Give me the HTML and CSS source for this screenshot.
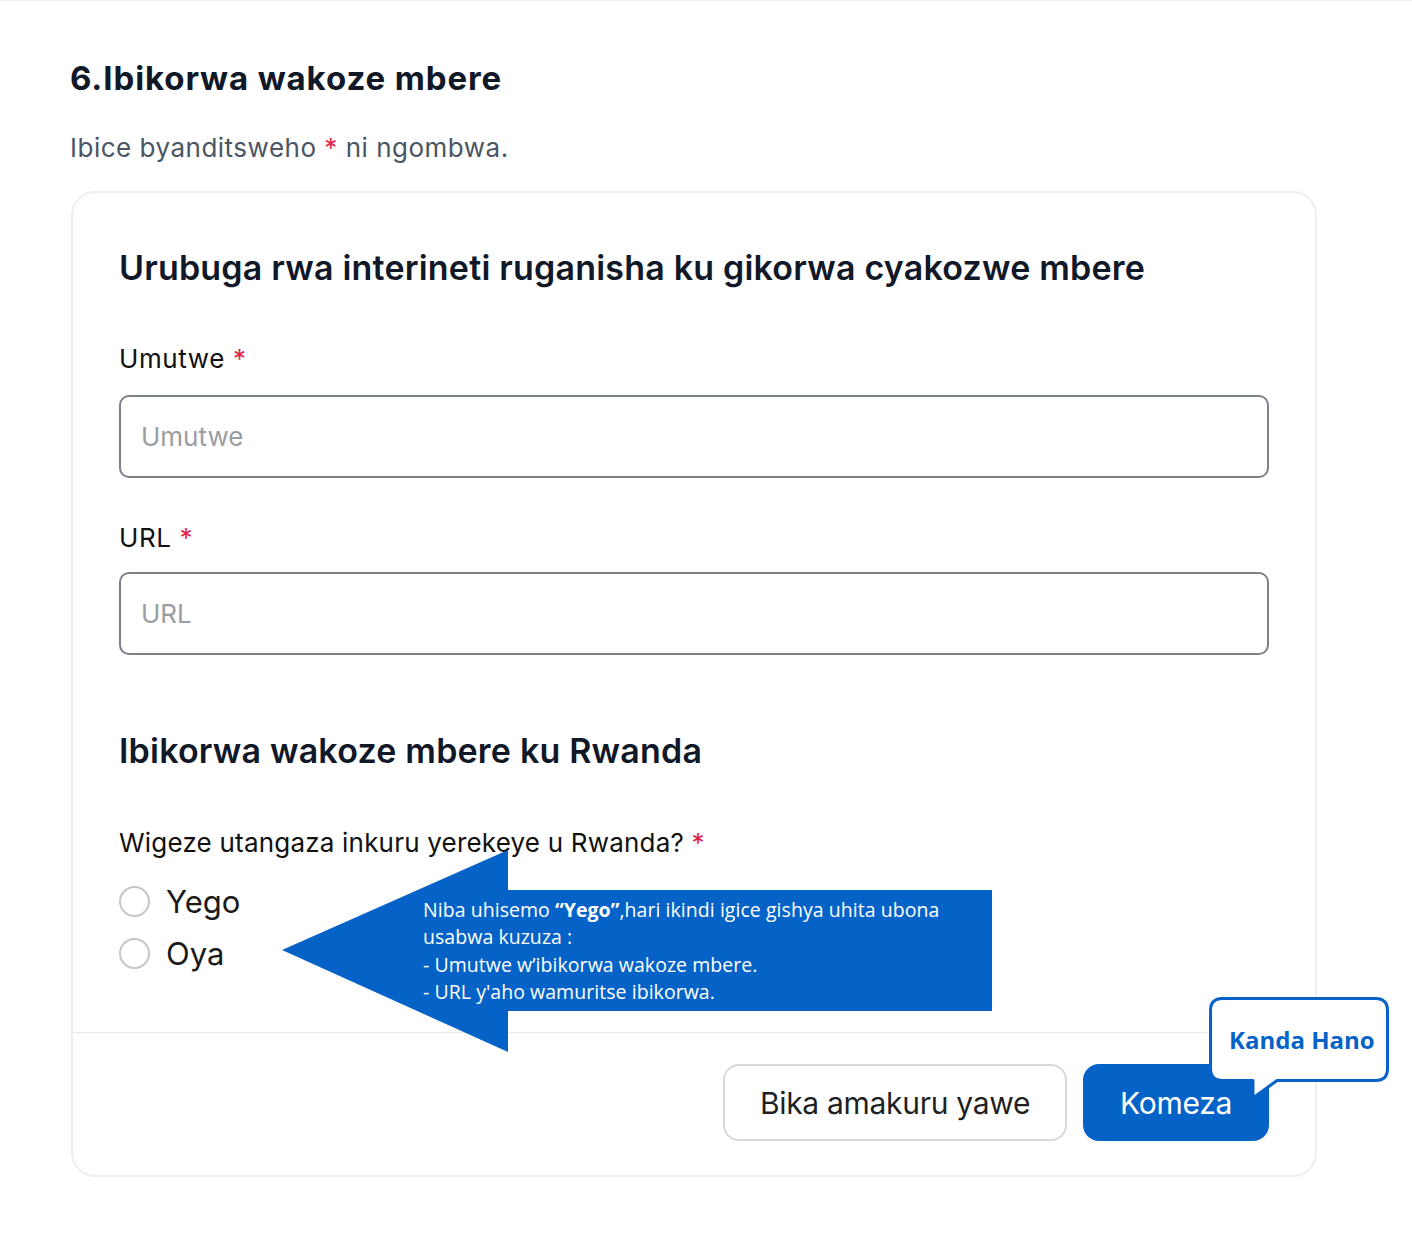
FILE: index.html
```html
<!DOCTYPE html>
<html lang="rw">
<head>
<meta charset="utf-8">
<title>Ibikorwa wakoze mbere</title>
<link rel="stylesheet" href="styles.css">
</head>
<body>
<div class="page">
  <h1 class="title">6.Ibikorwa wakoze mbere</h1>
  <p class="subtitle">Ibice byanditsweho <span class="req">*</span> ni ngombwa.</p>

  <div class="card">
    <div class="card-body">
      <h2 class="section-title">Urubuga rwa interineti ruganisha ku gikorwa cyakozwe mbere</h2>

      <label class="label label-first">Umutwe <span class="req">*</span></label>
      <input class="input input-first" type="text" placeholder="Umutwe">

      <label class="label label-second">URL <span class="req">*</span></label>
      <input class="input input-second" type="text" placeholder="URL">

      <h2 class="section-title section-second">Ibikorwa wakoze mbere ku Rwanda</h2>

      <p class="question">Wigeze utangaza inkuru yerekeye u Rwanda? <span class="req">*</span></p>
      <div class="radios">
        <label class="radio"><span class="circle"></span><span>Yego</span></label>
        <label class="radio"><span class="circle"></span><span>Oya</span></label>
      </div>
    </div>
    <div class="card-footer">
      <button class="btn btn-outline">Bika amakuru yawe</button>
      <button class="btn btn-primary">Komeza</button>
    </div>
  </div>

  <div class="arrow-callout">
    <svg class="arrow-shape" width="710" height="202" viewBox="0 0 710 202">
      <polygon points="0,100 226,0 226,40 710,40 710,161 226,161 226,202" fill="#0563c8"/>
    </svg>
    <div class="arrow-text">
      Niba uhisemo <b>“Yego”</b>,hari ikindi igice gishya uhita ubona<br>
      usabwa kuzuza :<br>
      - Umutwe w’ibikorwa wakoze mbere.<br>
      - URL y'aho wamuritse ibikorwa.
    </div>
  </div>

  <div class="click-callout">
    <svg class="bubble" width="185" height="110" viewBox="0 0 185 110">
      <path d="M15.5 3.5 H168.5 Q180.5 3.5 180.5 15.5 V73.5 Q180.5 85.5 168.5 85.5 H70 L46 103 L46 85.5 H15.5 Q3.5 85.5 3.5 73.5 V15.5 Q3.5 3.5 15.5 3.5 Z" fill="#ffffff" stroke="#0563c8" stroke-width="3" stroke-linejoin="round"/>
    </svg>
    <span class="bubble-text">Kanda Hano</span>
  </div>
</div>
</body>
</html>
```

FILE: styles.css
```css
* { box-sizing: border-box; }

html, body {
  margin: 0;
  padding: 0;
  background: #ffffff;
}

body {
  border-top: 1px solid #efefef;
  font-family: Inter, "Noto Sans", sans-serif;
  color: #111827;
}

.page {
  position: relative;
  padding: 57px 0 0 70px;
  min-height: 1257px;
}

.title {
  margin: 0;
  font-size: 33px;
  line-height: 40px;
  font-weight: 700;
  letter-spacing: 0.9px;
  color: #111827;
}

.subtitle {
  margin: 34px 0 0;
  font-size: 26px;
  line-height: 32px;
  color: #4b5563;
  letter-spacing: 0.5px;
}

.req { color: #e02447; }

.card {
  margin: 27px 0 0 1px;
  width: 1246px;
  border: 2px solid #eceef1;
  border-radius: 24px;
  background: #ffffff;
}

.card-body {
  padding: 53px 46px 53px;
  display: flex;
  flex-direction: column;
  align-items: flex-start;
}

.section-title {
  margin: 0;
  font-size: 34px;
  line-height: 44px;
  font-weight: 600;
  letter-spacing: 0.2px;
  color: #111827;
}

.section-second { margin-top: 74px; }

.label {
  font-size: 26px;
  line-height: 32px;
  color: #111111;
  letter-spacing: 0.6px;
}

.label-first { margin-top: 53px; }
.label-second { margin-top: 44px; }

.input {
  width: 1150px;
  height: 83px;
  border: 2px solid #7b8089;
  border-radius: 10px;
  padding: 0 20px;
  font-family: Inter, "Noto Sans", sans-serif;
  font-size: 26px;
  color: #111;
  background: #fff;
}

.input-first { margin-top: 20px; }
.input-second { margin-top: 18px; }

.input::placeholder { color: #9a9da2; }

.question {
  margin: 53px 0 0;
  font-size: 26px;
  line-height: 34px;
  color: #111111;
  letter-spacing: 0.2px;
}

.radios {
  margin-top: 15px;
  display: flex;
  flex-direction: column;
}

.radio {
  display: flex;
  align-items: center;
  gap: 16px;
  height: 52px;
  font-size: 31px;
  color: #1a1a1a;
}

.circle {
  width: 31px;
  height: 31px;
  border: 2px solid #c6c6c6;
  border-radius: 50%;
  background: #fff;
}

.card-footer {
  border-top: 1px solid #e8e9ec;
  padding: 31px 46px 34px;
  display: flex;
  justify-content: flex-end;
  gap: 16px;
}

.btn {
  height: 77px;
  border-radius: 16px;
  font-family: Inter, "Noto Sans", sans-serif;
  font-size: 30px;
  letter-spacing: -0.3px;
}

.btn-outline {
  width: 344px;
  background: #fff;
  border: 2px solid #d6d8dc;
  color: #1f1f1f;
}

.btn-primary {
  width: 186px;
  background: #0563c8;
  border: none;
  color: #ffffff;
}

.arrow-callout {
  position: absolute;
  left: 282px;
  top: 849px;
  width: 710px;
  height: 202px;
}

.arrow-shape {
  position: absolute;
  left: 0;
  top: 0;
}

.arrow-text {
  position: absolute;
  left: 141px;
  top: 46px;
  font-family: "Open Sans", "Noto Sans", sans-serif;
  font-size: 19.5px;
  line-height: 27.4px;
  color: #ffffff;
  letter-spacing: 0.05px;
  white-space: nowrap;
}

.arrow-text b { font-weight: 700; }

.click-callout {
  position: absolute;
  left: 1207px;
  top: 994px;
  width: 185px;
  height: 110px;
}

.bubble {
  position: absolute;
  left: 0;
  top: 0;
}

.bubble-text {
  position: absolute;
  left: 22px;
  top: 29px;
  font-family: "Open Sans", "Noto Sans", sans-serif;
  font-size: 24px;
  line-height: 32px;
  font-weight: 700;
  color: #0563c8;
  letter-spacing: 0px;
}
```
